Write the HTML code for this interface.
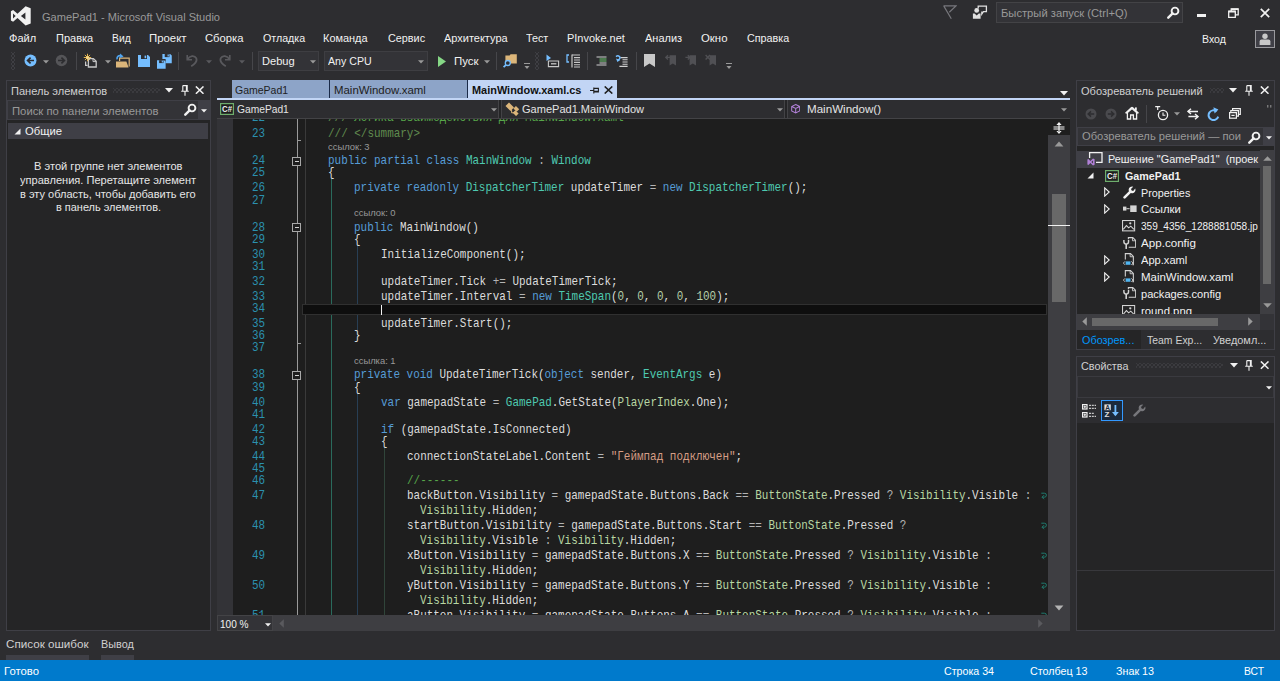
<!DOCTYPE html>
<html lang="ru"><head><meta charset="utf-8"><title>GamePad1 - Microsoft Visual Studio</title>
<style>
html,body{margin:0;padding:0}
body{width:1280px;height:681px;overflow:hidden;background:#2d2d30;position:relative;font-family:"Liberation Sans",sans-serif;font-size:11.5px;color:#f1f1f1}
div,svg.abs,.abs,.t{position:absolute}
h1,h2,p{margin:0;font-weight:400;font-size:11.5px}
.t{white-space:pre;line-height:20px;transform-origin:0 50%;color:#f1f1f1}
.grip{background-image:radial-gradient(circle,var(--c) 0.7px,transparent 0.9px),radial-gradient(circle,var(--c) 0.7px,transparent 0.9px);background-size:4px 4px;background-position:0 0,2px 2px}
.dots{background-image:radial-gradient(circle,#4a4a4f 0.6px,transparent 0.8px),radial-gradient(circle,#4a4a4f 0.6px,transparent 0.8px);background-size:4px 4px;background-position:0 0,2px 2px}
.code{overflow:hidden;background:#1e1e1e}
.tree{overflow:hidden}
.ln{white-space:pre;font-family:"Liberation Mono",monospace;font-size:13.3px;line-height:20px;color:#dcdcdc;transform-origin:0 50%;transform:scaleX(0.8234)}
.num{color:#2b91af}
.k{color:#569cd6}.ty{color:#4ec9b0}.e{color:#b8d7a3}.s{color:#d69d85}.c{color:#57a64a}.d{color:#608b4e}.n{color:#b5cea8}.o{color:#b4b4b4}
.fold{width:9px;height:9px;box-sizing:border-box;border:1px solid #a8a8a8;background:#1e1e1e}
.fold:after{content:"";position:absolute;left:1.5px;top:3px;width:4px;height:1px;background:#d0d0d0}
</style></head>
<body>
<header class="titlebar">
<svg class="abs" style="left:10px;top:5px" width="22" height="22" viewBox="0 0 22 22"><path fill="#f1f1f1" d="M15.6 1.2 L20.7 3.3 V18.4 L15.6 20.5 L7.5 13 L3.1 16.7 L0.9 15.5 V6.3 L3.1 5.1 L7.5 8.8 Z M15.4 7.4 L10.9 10.9 L15.4 14.4 Z M3 8.4 V13.4 L5.7 10.9 Z"/></svg>
<h1 class="t" style="left:41.7px;top:7px;color:#999999;transform:scaleX(0.9614);">GamePad1 - Microsoft Visual Studio</h1>
<svg class="abs" style="left:943px;top:5px" width="14" height="15" viewBox="0 0 14 15"><path fill="none" stroke="#77777c" stroke-width="1.2" d="M0.5 0.9 H13 L6.3 7.2 M0.7 0.9 L8.3 13.8"/></svg>
<svg class="abs" style="left:972px;top:5px" width="16" height="15" viewBox="0 0 16 15"><path fill="none" stroke="#e0e0e0" stroke-width="1.3" d="M6.2 3.4 V1.2 H14.4 V6.6 H11.4 L9.8 9 V6.6"/><circle cx="4.7" cy="5.4" r="2.4" fill="#e0e0e0"/><path fill="#e0e0e0" d="M0.9 13.8 V8.4 H2.6 L4.7 10.4 L6.8 8.4 H8.6 V13.8 Z"/></svg>
<div class="quick" style="left:996px;top:2px;width:187px;height:21px;background:#333337;border:1px solid #434346;box-sizing:border-box;"></div>
<div class="t" style="left:1001.0px;top:3px;color:#999999;transform:scaleX(0.9737);">Быстрый запуск (Ctrl+Q)</div>
<svg class="abs" style="left:1167px;top:5.5px" width="13" height="13" viewBox="0 0 13 13"><circle cx="8" cy="5" r="3.4" fill="none" stroke="#f1f1f1" stroke-width="1.9"/><path d="M5.6 7.4 L1.3 11.7" stroke="#f1f1f1" stroke-width="2.4" stroke-linecap="round"/></svg>
<div style="left:1197px;top:14px;width:9px;height:3px;background:#f1f1f1;"></div>
<svg class="abs" style="left:1228px;top:8px" width="11" height="10" viewBox="0 0 11 10"><path fill="none" stroke="#f1f1f1" stroke-width="1.3" d="M0.7 3.2 H7.3 V9.3 H0.7 Z M3.2 3 V0.8 H10.2 V6.8 H7.6"/><path d="M0.7 3.6H7.3M3.2 1.2H10.2" stroke="#f1f1f1" stroke-width="1.6"/></svg>
<svg class="abs" style="left:1260px;top:8px" width="10" height="10" viewBox="0 0 10 10"><path d="M0.8 0.8 L9.2 9.2 M9.2 0.8 L0.8 9.2" stroke="#f1f1f1" stroke-width="1.7"/></svg>
</header>
<nav class="menubar">
<span class="t" style="left:9.4px;top:28px;transform:scaleX(0.9618);">Файл</span>
<span class="t" style="left:55.6px;top:28px;transform:scaleX(0.9573);">Правка</span>
<span class="t" style="left:111.9px;top:28px;transform:scaleX(0.8985);">Вид</span>
<span class="t" style="left:149.4px;top:28px;transform:scaleX(0.9897);">Проект</span>
<span class="t" style="left:205.3px;top:28px;transform:scaleX(0.9778);">Сборка</span>
<span class="t" style="left:262.5px;top:28px;transform:scaleX(0.9281);">Отладка</span>
<span class="t" style="left:323.4px;top:28px;transform:scaleX(0.9518);">Команда</span>
<span class="t" style="left:387.6px;top:28px;transform:scaleX(0.9418);">Сервис</span>
<span class="t" style="left:443.6px;top:28px;transform:scaleX(0.9546);">Архитектура</span>
<span class="t" style="left:526.1px;top:28px;transform:scaleX(0.9371);">Тест</span>
<span class="t" style="left:567.3px;top:28px;transform:scaleX(0.9517);">PInvoke.net</span>
<span class="t" style="left:644.7px;top:28px;transform:scaleX(0.9555);">Анализ</span>
<span class="t" style="left:700.7px;top:28px;transform:scaleX(0.9912);">Окно</span>
<span class="t" style="left:746.8px;top:28px;transform:scaleX(0.9352);">Справка</span>
<span class="t" style="left:1201.5px;top:29px;transform:scaleX(0.9148);">Вход</span>
<div class="avatar" style="left:1255px;top:30px;width:20px;height:18px;background:#3f3f46;border:1px solid #9a9a9e;box-sizing:border-box;"><svg width="18" height="16" viewBox="0 0 18 16" style="display:block"><circle cx="9" cy="5.2" r="2.7" fill="#c8c8c8"/><path d="M3.6 14 V10.4 Q3.6 8.6 5.6 8.6 H12.4 Q14.4 8.6 14.4 10.4 V14 Z" fill="#c8c8c8"/></svg></div>
</nav>
<div class="toolbar">
<div class="abs grip" style="left:11px;top:52px;width:4px;height:18px;--c:#3f3f44"></div>
<svg class="abs" style="left:24px;top:54px" width="13" height="13" viewBox="0 0 13 13"><circle cx="6.5" cy="6.5" r="6" fill="#75beff"/><path d="M10 6.5 H4 M6.6 3.6 L3.6 6.5 L6.6 9.4" stroke="#2d2d30" stroke-width="1.7" fill="none"/></svg>
<svg class="abs" style="left:42.8px;top:60px" width="6" height="4" viewBox="0 0 6 4"><path d="M0 0.3H6L3 3.6Z" fill="#999999"/></svg>
<svg class="abs" style="left:55px;top:54px" width="13" height="13" viewBox="0 0 13 13"><circle cx="6.5" cy="6.5" r="5.8" fill="#555558"/><path d="M3 6.5 H9 M6.4 3.6 L9.4 6.5 L6.4 9.4" stroke="#2d2d30" stroke-width="1.7" fill="none"/></svg>
<div style="left:76px;top:52px;width:1px;height:18px;background:#46464a;"></div>
<svg class="abs" style="left:83px;top:53px" width="16" height="16" viewBox="0 0 16 16"><path d="M2.6 8.5 V12.4 H4.6" fill="none" stroke="#c8c8c8" stroke-width="1.2"/><path d="M5.4 5.6 H10.4 L13.2 8.2 V14 H5.4 Z" fill="none" stroke="#c8c8c8" stroke-width="1.3"/><path d="M10 5.8 V8.6 H13" fill="none" stroke="#c8c8c8" stroke-width="1"/><path d="M4.5 0.8 V8.2 M0.8 4.5 H8.2 M1.9 1.9 L7.1 7.1 M7.1 1.9 L1.9 7.1" stroke="#e8b64a" stroke-width="1"/><circle cx="4.5" cy="4.5" r="1.5" fill="#f6d88a"/></svg>
<svg class="abs" style="left:104.5px;top:60px" width="6" height="4" viewBox="0 0 6 4"><path d="M0 0.3H6L3 3.6Z" fill="#999999"/></svg>
<svg class="abs" style="left:115px;top:53px" width="16" height="16" viewBox="0 0 16 16"><path d="M4.6 8 V5.2 H14.2 V13.6" fill="none" stroke="#dcb67a" stroke-width="1.2"/><path d="M1 8.6 H11.4 L13.6 14.6 H1 Z" fill="#dcb67a"/><path d="M2 6.4 C1.6 3 4.4 1.8 6.4 3.2" fill="none" stroke="#4fa4f0" stroke-width="1.6"/><path d="M5.2 0.6 L8.6 3.4 L4.6 5.2 Z" fill="#4fa4f0"/></svg>
<svg class="abs" style="left:138px;top:55px" width="12" height="12" viewBox="0 0 12 12"><path d="M0 0 H10 L12 2 V12 H0 Z" fill="#75beff"/><rect x="3" y="0" width="6" height="4" fill="#2d2d30"/><rect x="6.6" y="0.6" width="1.6" height="2.6" fill="#75beff"/></svg>
<svg class="abs" style="left:157px;top:54px" width="15" height="15" viewBox="0 0 15 15"><g transform="translate(5.4,0) scale(.78)"><path d="M0 0 H10 L12 2 V12 H0 Z" fill="#75beff"/><rect x="3" y="0" width="6" height="4" fill="#2d2d30"/><rect x="6.6" y="0.6" width="1.6" height="2.6" fill="#75beff"/></g><rect x="-1" y="5" width="9.6" height="11" fill="#2d2d30"/><g transform="translate(0,6.2) scale(.72)"><path d="M0 0 H10 L12 2 V12 H0 Z" fill="#75beff"/><rect x="3" y="0" width="6" height="4" fill="#2d2d30"/><rect x="6.6" y="0.6" width="1.6" height="2.6" fill="#75beff"/></g></svg>
<div style="left:178px;top:52px;width:1px;height:18px;background:#46464a;"></div>
<svg class="abs" style="left:186px;top:54px" width="12" height="13" viewBox="0 0 12 13"><path d="M1.2 1 V5.8 H6" fill="none" stroke="#59595d" stroke-width="1.6"/><path d="M1.6 5.4 C3.5 1.6 8.6 1 10.2 4.2 C11.6 7.4 8.6 10.2 5.2 12.2" fill="none" stroke="#59595d" stroke-width="1.8"/></svg>
<svg class="abs" style="left:206px;top:60px" width="6" height="4" viewBox="0 0 6 4"><path d="M0 0.3H6L3 3.6Z" fill="#59595d"/></svg>
<svg class="abs" style="left:218.5px;top:54px;transform:scaleX(-1)" width="12" height="13" viewBox="0 0 12 13"><path d="M1.2 1 V5.8 H6" fill="none" stroke="#59595d" stroke-width="1.6"/><path d="M1.6 5.4 C3.5 1.6 8.6 1 10.2 4.2 C11.6 7.4 8.6 10.2 5.2 12.2" fill="none" stroke="#59595d" stroke-width="1.8"/></svg>
<svg class="abs" style="left:239px;top:60px" width="6" height="4" viewBox="0 0 6 4"><path d="M0 0.3H6L3 3.6Z" fill="#59595d"/></svg>
<div style="left:251.5px;top:52px;width:1px;height:18px;background:#46464a;"></div>
<div class="combo" style="left:258px;top:50.6px;width:61px;height:20px;background:#333337;border:1px solid #3e3e42;box-sizing:border-box;"></div>
<span class="t" style="left:261.6px;top:51px;transform:scaleX(0.9649);">Debug</span>
<svg class="abs" style="left:309.5px;top:60px" width="6" height="4" viewBox="0 0 6 4"><path d="M0 0.3H6L3 3.6Z" fill="#999999"/></svg>
<div class="combo" style="left:324px;top:50.6px;width:104px;height:20px;background:#333337;border:1px solid #3e3e42;box-sizing:border-box;"></div>
<span class="t" style="left:328.1px;top:51px;transform:scaleX(0.9240);">Any CPU</span>
<svg class="abs" style="left:418px;top:60px" width="6" height="4" viewBox="0 0 6 4"><path d="M0 0.3H6L3 3.6Z" fill="#999999"/></svg>
<svg class="abs" style="left:437.5px;top:55.5px" width="8" height="11" viewBox="0 0 8 11"><path d="M0 0 L8 5.5 L0 11 Z" fill="#86d886"/></svg>
<span class="t" style="left:453.6px;top:51px;transform:scaleX(0.9971);">Пуск</span>
<svg class="abs" style="left:484px;top:60px" width="6" height="4" viewBox="0 0 6 4"><path d="M0 0.3H6L3 3.6Z" fill="#999999"/></svg>
<div style="left:495.5px;top:52px;width:1px;height:18px;background:#46464a;"></div>
<svg class="abs" style="left:502px;top:53px" width="16" height="16" viewBox="0 0 16 16"><path d="M3.4 2.4 H7.6 L8.6 1.2 H14.8 V10.6 H3.4 Z" fill="#dcb67a"/><circle cx="5.8" cy="10" r="2.5" fill="#2d2d30" stroke="#75beff" stroke-width="1.3"/><path d="M4 11.8 L1.6 14.2" stroke="#75beff" stroke-width="1.8"/></svg>
<svg class="abs" style="left:524px;top:63px" width="6" height="7" viewBox="0 0 6 7"><path d="M0 0.5H6" stroke="#999" stroke-width="1"/><path d="M0.5 3H5.5L3 6Z" fill="#999"/></svg>
<div class="abs grip" style="left:535px;top:52px;width:4px;height:18px;--c:#3f3f44"></div>
<svg class="abs" style="left:546px;top:54px" width="14" height="14" viewBox="0 0 14 14"><path d="M0.5 0.5 L5 4 L0.5 7 Z" fill="#75beff"/><path d="M2.4 7 H12.6 V12.6 H2.4 Z" fill="none" stroke="#c8c8c8" stroke-width="1.1"/><path d="M5 9.8 H10.4" stroke="#c8c8c8" stroke-width="1.3"/></svg>
<svg class="abs" style="left:566px;top:54px" width="15" height="14" viewBox="0 0 15 14"><path d="M3 1 H1 V8 H3" fill="none" stroke="#75beff" stroke-width="1.3"/><path d="M6 0.4 V13.4" stroke="#c8c8c8" stroke-width="1.2"/><path d="M6 1H14M8 3.6H14M8 6H14M8 8.4H14M8 10.8H14M8 13H14" stroke="#c8c8c8" stroke-width="1.1"/></svg>
<div style="left:587px;top:52px;width:1px;height:18px;background:#46464a;"></div>
<svg class="abs" style="left:595.5px;top:55.5px" width="11" height="10" viewBox="0 0 11 10"><path d="M0.5 1H10.5M3.5 7H10.5M0.5 9H10.5" stroke="#d0d0d0" stroke-width="1.1"/><path d="M3.5 3H10.5M3.5 5H10.5" stroke="#6cc86c" stroke-width="1.1"/></svg>
<svg class="abs" style="left:615px;top:54.5px" width="13" height="12" viewBox="0 0 13 12"><path d="M5.5 2.6H12.6M7.5 4.8H12.6M7.5 7H12.6M7.5 9.2H12.6M4.4 11.4H12.6" stroke="#d0d0d0" stroke-width="1.1"/><path d="M1 1.6 C3.4 -0.2 6 1.8 4.4 4 L3 5.4" fill="none" stroke="#75beff" stroke-width="1.5"/><path d="M1 3.6 L2.4 7 L5.2 5 Z" fill="#75beff"/></svg>
<div style="left:636.2px;top:52px;width:1px;height:18px;background:#46464a;"></div>
<svg class="abs" style="left:644px;top:54px" width="11" height="13" viewBox="0 0 11 13"><path d="M0 0H11V13L5.5 9.6L0 13Z" fill="#c8c8c8"/></svg>
<svg class="abs" style="left:665px;top:54px" width="12" height="13" viewBox="0 0 12 13"><path d="M4.6 1.2H11V11.6L7.8 9.4L4.6 11.6Z" fill="#505054"/><path d="M5.4 3.4H1.2M3 1.2L0.8 3.4L3 5.6" fill="none" stroke="#505054" stroke-width="1.4"/></svg>
<svg class="abs" style="left:685px;top:54px" width="12" height="13" viewBox="0 0 12 13"><path d="M4.6 1.2H11V11.6L7.8 9.4L4.6 11.6Z" fill="#505054"/><path d="M0.4 3.4H4.8M2.8 1.2L5 3.4L2.8 5.6" fill="none" stroke="#505054" stroke-width="1.4"/></svg>
<svg class="abs" style="left:705px;top:54px" width="12" height="13" viewBox="0 0 12 13"><path d="M4.6 1.2H11V11.6L7.8 9.4L4.6 11.6Z" fill="#505054"/><path d="M0.6 1L5 5.6M5 1L0.6 5.6" fill="none" stroke="#505054" stroke-width="1.4"/></svg>
<svg class="abs" style="left:726px;top:63px" width="6" height="7" viewBox="0 0 6 7"><path d="M0 0.5H6" stroke="#999" stroke-width="1"/><path d="M0.5 3H5.5L3 6Z" fill="#999"/></svg>
</div>
<aside class="toolbox">
<div class="pane" style="left:6px;top:80px;width:205px;height:551px;background:#252526;border:1px solid #3f3f46;box-sizing:border-box;"></div>
<div style="left:7px;top:81px;width:203px;height:19px;background:#2d2d30;"></div>
<h2 class="t" style="left:10.6px;top:81px;color:#d0d0d0;transform:scaleX(0.9625);">Панель элементов</h2>
<div class="abs dots" style="left:113px;top:88px;width:47px;height:5px"></div>
<svg class="abs" style="left:165px;top:87.6px" width="8" height="5" viewBox="0 0 8 5"><path d="M0 0H8L4 4.6Z" fill="#f1f1f1"/></svg>
<svg class="abs" style="left:180.5px;top:84.8px" width="8" height="11" viewBox="0 0 8 11"><path d="M1.8 0.6 H6.2 V6 M1.8 0.6 V6 M0.2 6.3 H7.8 M4 6.3 V10.8 M5.4 0.6 V6" fill="none" stroke="#f1f1f1" stroke-width="1.1"/></svg>
<svg class="abs" style="left:194.8px;top:86px" width="9.4" height="8.2" viewBox="0 0 10 9"><path d="M0.8 0.5 L9.2 8.5 M9.2 0.5 L0.8 8.5" stroke="#f1f1f1" stroke-width="1.7"/></svg>
<div class="search" style="left:7px;top:100px;width:203px;height:20px;background:#333337;border:1px solid #3f3f46;box-sizing:border-box;"></div>
<div style="left:198px;top:101px;width:11px;height:18px;background:#3f3f46;"></div>
<span class="t" style="left:11.6px;top:101px;color:#999999;transform:scaleX(0.9825);">Поиск по панели элементов</span>
<svg class="abs" style="left:183.5px;top:102.8px" width="13" height="13" viewBox="0 0 13 13"><circle cx="8" cy="5" r="3.4" fill="none" stroke="#f1f1f1" stroke-width="1.9"/><path d="M5.6 7.4 L1.3 11.7" stroke="#f1f1f1" stroke-width="2.4" stroke-linecap="round"/></svg>
<svg class="abs" style="left:200.5px;top:108.5px" width="6" height="4" viewBox="0 0 6 4"><path d="M0 0.3H6L3 3.6Z" fill="#f1f1f1"/></svg>
<div class="grp" style="left:8px;top:123px;width:200px;height:16px;background:#3f3f46;"></div>
<svg class="abs" style="left:13.5px;top:127.5px" width="7" height="7" viewBox="0 0 7 7"><path d="M6.5 0.5V6.5H0.5Z" fill="#f1f1f1"/></svg>
<span class="t" style="left:25.0px;top:121px;transform:scaleX(0.9781);">Общие</span>
<p class="t" style="left:33.8px;top:156px;color:#e6e6e6;transform:scaleX(0.9660);">В этой группе нет элементов</p>
<p class="t" style="left:19.5px;top:170px;color:#e6e6e6;transform:scaleX(0.9624);">управления. Перетащите элемент</p>
<p class="t" style="left:20.0px;top:184px;color:#e6e6e6;transform:scaleX(0.9577);">в эту область, чтобы добавить его</p>
<p class="t" style="left:56.0px;top:197px;color:#e6e6e6;transform:scaleX(0.9510);">в панель элементов.</p>
</aside>
<main class="editor">
<div class="tab" style="left:232px;top:80px;width:97px;height:18px;background:#8da4c8;"></div>
<div class="tab" style="left:330px;top:80px;width:136.5px;height:18px;background:#8da4c8;"></div>
<div class="tab active" style="left:467.6px;top:80px;width:149.6px;height:18px;background:#c2d5f5;"></div>
<div class="tabline" style="left:217px;top:97.5px;width:853px;height:2px;background:#c2d5f5;"></div>
<div style="left:329px;top:80px;width:1px;height:17.5px;background:#1a2a48;"></div>
<div style="left:466.5px;top:80px;width:1px;height:17.5px;background:#1a2a48;"></div>
<span class="t" style="left:235.3px;top:80px;color:#1e1e1e;transform:scaleX(0.9126);">GamePad1</span>
<span class="t" style="left:334.3px;top:80px;color:#1e1e1e;transform:scaleX(0.9917);">MainWindow.xaml</span>
<span class="t" style="left:472.0px;top:80px;color:#111111;font-weight:700;transform:scaleX(0.9501);">MainWindow.xaml.cs</span>
<svg class="abs" style="left:589.5px;top:86.5px" width="9" height="7" viewBox="0 0 9 7"><path d="M0 3.5 H3.6 M3.8 0.4 V6.6 M3.8 1.4 H8.4 V5 H3.8 M3.8 4.3H8.4" fill="none" stroke="#1e1e1e" stroke-width="1.1"/></svg>
<svg class="abs" style="left:604px;top:86px" width="9" height="8" viewBox="0 0 9 8"><path d="M0.7 0.4 L8.3 7.6 M8.3 0.4 L0.7 7.6" stroke="#1e1e1e" stroke-width="1.5"/></svg>
<svg class="abs" style="left:1060px;top:91px" width="8" height="5" viewBox="0 0 8 5"><path d="M0 0H8L4 4.4Z" fill="#f1f1f1"/></svg>
<div class="navbar" style="left:217px;top:99.7px;width:853px;height:19.3px;background:#2d2d30;"></div>
<div style="left:217px;top:118px;width:853px;height:1px;background:#434346;"></div>
<div style="left:497.5px;top:100px;width:4.5px;height:18px;background:#252527;border:1px solid #434346;box-sizing:border-box;border-top:0;border-bottom:0;"></div>
<div style="left:783.8px;top:100px;width:4.5px;height:18px;background:#252527;border:1px solid #434346;box-sizing:border-box;border-top:0;border-bottom:0;"></div>
<svg class="abs" style="left:220px;top:103px" width="14" height="12" viewBox="0 0 14 12"><rect x="0.6" y="0.6" width="12.8" height="10.8" fill="#1e1e1e" stroke="#6fae6d" stroke-width="1.2"/><text x="2" y="9" font-family="Liberation Sans, sans-serif" font-size="8.5" font-weight="700" fill="#f1f1f1" textLength="10" lengthAdjust="spacingAndGlyphs">C#</text></svg>
<span class="t" style="left:236.9px;top:99px;color:#e4e4e4;transform:scaleX(0.8902);">GamePad1</span>
<svg class="abs" style="left:490.5px;top:108px" width="6" height="4" viewBox="0 0 6 4"><path d="M0 0.3H6L3 3.6Z" fill="#999999"/></svg>
<svg class="abs" style="left:505px;top:102px" width="15" height="14" viewBox="0 0 15 14"><path d="M0.5 4 L4 0.5 L9 5.5 L5.5 9 Z" fill="#dcb67a"/><rect x="9" y="5" width="4.6" height="3.6" fill="#dcb67a" transform="rotate(45 11.3 6.8)"/><rect x="8.4" y="9.4" width="4.6" height="3.6" fill="#dcb67a" transform="rotate(45 10.7 11.2)"/><path d="M6.6 7.4 V10.8 H9" fill="none" stroke="#dcb67a" stroke-width="1"/></svg>
<span class="t" style="left:522.0px;top:99px;color:#e4e4e4;transform:scaleX(0.9591);">GamePad1.MainWindow</span>
<svg class="abs" style="left:776.5px;top:108px" width="6" height="4" viewBox="0 0 6 4"><path d="M0 0.3H6L3 3.6Z" fill="#999999"/></svg>
<svg class="abs" style="left:791px;top:104.2px" width="9.4" height="9.4" viewBox="0 0 11 11"><path d="M5.5 0.6 L10.2 2.9 V8.1 L5.5 10.4 L0.8 8.1 V2.9 Z M0.9 3 L5.5 5.2 L10.1 3 M5.5 5.2 V10.3" fill="none" stroke="#b180d7" stroke-width="1.2"/></svg>
<span class="t" style="left:807.4px;top:99px;color:#e4e4e4;transform:scaleX(1.0082);">MainWindow()</span>
<svg class="abs" style="left:1061px;top:108px" width="6" height="4" viewBox="0 0 6 4"><path d="M0 0.3H6L3 3.6Z" fill="#999999"/></svg>
<section class="abs code" style="left:217px;top:119px;width:831px;height:496px">
<div style="left:0px;top:0px;width:16px;height:496px;background:#333337;"></div>
<div style="left:88.3px;top:0px;width:1px;height:496px;background:#3a3a3a;"></div>
<div style="left:114.2px;top:60px;width:1px;height:436px;background:#2a6a5c;"></div>
<div style="left:140.4px;top:127px;width:1px;height:85px;background:#283f55;"></div>
<div style="left:140.4px;top:275px;width:1px;height:221px;background:#283f55;"></div>
<div style="left:166.5px;top:329px;width:1px;height:167px;background:#30453a;"></div>
<div style="left:79.5px;top:0px;width:1px;height:496px;background:#9a9a9a;"></div>
<div style="left:80px;top:21px;width:3.5px;height:1px;background:#9a9a9a;"></div>
<div style="left:80px;top:223.5px;width:3.5px;height:1px;background:#9a9a9a;"></div>
<div style="left:84.5px;top:185px;width:745px;height:11px;background:#0e0e0e;border:1px solid #303030;box-sizing:border-box;"></div>
<div style="left:164px;top:186px;width:1px;height:9.5px;background:#f1f1f1;"></div>
<div class="ln num" style="left:35.3px;top:-11.00px">22</div>
<div class="ln" style="left:110.99px;top:-11.00px"><span class="d">/// </span><span class="c">Логика взаимодействия для MainWindow.xaml</span></div>
<div class="ln num" style="left:35.3px;top:5.00px">23</div>
<div class="ln" style="left:110.99px;top:5.00px"><span class="d">/// &lt;/summary&gt;</span></div>
<div class="ln num" style="left:35.3px;top:32.00px">24</div>
<div class="fold" style="left:75px;top:37.5px"></div>
<div class="ln" style="left:110.99px;top:32.00px"><span class="k">public partial class </span><span class="ty">MainWindow</span> <span class="o">:</span> <span class="ty">Window</span></div>
<div class="ln num" style="left:35.3px;top:44.00px">25</div>
<div class="ln" style="left:110.99px;top:44.00px">{</div>
<div class="ln num" style="left:35.3px;top:59.00px">26</div>
<div class="ln" style="left:137.28px;top:59.00px"><span class="k">private readonly </span><span class="ty">DispatcherTimer</span> updateTimer <span class="o">=</span> <span class="k">new </span><span class="ty">DispatcherTimer</span>();</div>
<div class="ln num" style="left:35.3px;top:72.00px">27</div>
<div class="ln num" style="left:35.3px;top:99.00px">28</div>
<div class="fold" style="left:75px;top:103.9px"></div>
<div class="ln" style="left:137.28px;top:99.00px"><span class="k">public </span>MainWindow()</div>
<div class="ln num" style="left:35.3px;top:111.00px">29</div>
<div class="ln" style="left:137.28px;top:111.00px">{</div>
<div class="ln num" style="left:35.3px;top:126.00px">30</div>
<div class="ln" style="left:163.56px;top:126.00px">InitializeComponent();</div>
<div class="ln num" style="left:35.3px;top:138.00px">31</div>
<div class="ln num" style="left:35.3px;top:153.00px">32</div>
<div class="ln" style="left:163.56px;top:153.00px">updateTimer.Tick <span class="o">+=</span> UpdateTimerTick;</div>
<div class="ln num" style="left:35.3px;top:168.00px">33</div>
<div class="ln" style="left:163.56px;top:168.00px">updateTimer.Interval <span class="o">=</span> <span class="k">new </span><span class="ty">TimeSpan</span>(<span class="n">0</span>, <span class="n">0</span>, <span class="n">0</span>, <span class="n">0</span>, <span class="n">100</span>);</div>
<div class="ln num" style="left:35.3px;top:180.00px">34</div>
<div class="ln num" style="left:35.3px;top:195.00px">35</div>
<div class="ln" style="left:163.56px;top:195.00px">updateTimer.Start();</div>
<div class="ln num" style="left:35.3px;top:207.00px">36</div>
<div class="ln" style="left:137.28px;top:207.00px">}</div>
<div class="ln num" style="left:35.3px;top:219.00px">37</div>
<div class="ln num" style="left:35.3px;top:246.00px">38</div>
<div class="fold" style="left:75px;top:251.6px"></div>
<div class="ln" style="left:137.28px;top:246.00px"><span class="k">private void </span>UpdateTimerTick(<span class="k">object</span> sender, <span class="ty">EventArgs</span> e)</div>
<div class="ln num" style="left:35.3px;top:259.00px">39</div>
<div class="ln" style="left:137.28px;top:259.00px">{</div>
<div class="ln num" style="left:35.3px;top:274.00px">40</div>
<div class="ln" style="left:163.56px;top:274.00px"><span class="k">var</span> gamepadState <span class="o">=</span> <span class="ty">GamePad</span>.GetState(<span class="e">PlayerIndex</span>.One);</div>
<div class="ln num" style="left:35.3px;top:286.00px">41</div>
<div class="ln num" style="left:35.3px;top:301.00px">42</div>
<div class="ln" style="left:163.56px;top:301.00px"><span class="k">if</span> (gamepadState.IsConnected)</div>
<div class="ln num" style="left:35.3px;top:313.00px">43</div>
<div class="ln" style="left:163.56px;top:313.00px">{</div>
<div class="ln num" style="left:35.3px;top:328.00px">44</div>
<div class="ln" style="left:189.85px;top:328.00px">connectionStateLabel.Content <span class="o">=</span> <span class="s">"Геймпад подключен"</span>;</div>
<div class="ln num" style="left:35.3px;top:340.00px">45</div>
<div class="ln num" style="left:35.3px;top:352.00px">46</div>
<div class="ln" style="left:189.85px;top:352.00px"><span class="c">//------</span></div>
<div class="ln num" style="left:35.3px;top:367.00px">47</div>
<div class="ln" style="left:189.85px;top:367.00px">backButton.Visibility <span class="o">=</span> gamepadState.Buttons.Back <span class="o">==</span> <span class="e">ButtonState</span>.Pressed <span class="o">?</span> <span class="e">Visibility</span>.Visible <span class="o">:</span></div>
<svg class="abs" style="left:823.5px;top:373.0px" width="6" height="8" viewBox="0 0 6 8"><path d="M0.3 1.2 H3.4 Q5.4 1.2 5.4 3.2 Q5.4 5.2 3.4 5.2 H1.2 M3 3.2 L1 5.2 L3 7.2" fill="none" stroke="#1f7a6e" stroke-width="1"/></svg>
<div class="ln" style="left:203.00px;top:382.00px"><span class="e">Visibility</span>.Hidden;</div>
<div class="ln num" style="left:35.3px;top:397.00px">48</div>
<div class="ln" style="left:189.85px;top:397.00px">startButton.Visibility <span class="o">=</span> gamepadState.Buttons.Start <span class="o">==</span> <span class="e">ButtonState</span>.Pressed <span class="o">?</span></div>
<svg class="abs" style="left:823.5px;top:403.0px" width="6" height="8" viewBox="0 0 6 8"><path d="M0.3 1.2 H3.4 Q5.4 1.2 5.4 3.2 Q5.4 5.2 3.4 5.2 H1.2 M3 3.2 L1 5.2 L3 7.2" fill="none" stroke="#1f7a6e" stroke-width="1"/></svg>
<div class="ln" style="left:203.00px;top:412.00px"><span class="e">Visibility</span>.Visible <span class="o">:</span> <span class="e">Visibility</span>.Hidden;</div>
<div class="ln num" style="left:35.3px;top:427.00px">49</div>
<div class="ln" style="left:189.85px;top:427.00px">xButton.Visibility <span class="o">=</span> gamepadState.Buttons.X <span class="o">==</span> <span class="e">ButtonState</span>.Pressed <span class="o">?</span> <span class="e">Visibility</span>.Visible <span class="o">:</span></div>
<svg class="abs" style="left:823.5px;top:433.0px" width="6" height="8" viewBox="0 0 6 8"><path d="M0.3 1.2 H3.4 Q5.4 1.2 5.4 3.2 Q5.4 5.2 3.4 5.2 H1.2 M3 3.2 L1 5.2 L3 7.2" fill="none" stroke="#1f7a6e" stroke-width="1"/></svg>
<div class="ln" style="left:203.00px;top:442.00px"><span class="e">Visibility</span>.Hidden;</div>
<div class="ln num" style="left:35.3px;top:457.00px">50</div>
<div class="ln" style="left:189.85px;top:457.00px">yButton.Visibility <span class="o">=</span> gamepadState.Buttons.Y <span class="o">==</span> <span class="e">ButtonState</span>.Pressed <span class="o">?</span> <span class="e">Visibility</span>.Visible <span class="o">:</span></div>
<svg class="abs" style="left:823.5px;top:463.0px" width="6" height="8" viewBox="0 0 6 8"><path d="M0.3 1.2 H3.4 Q5.4 1.2 5.4 3.2 Q5.4 5.2 3.4 5.2 H1.2 M3 3.2 L1 5.2 L3 7.2" fill="none" stroke="#1f7a6e" stroke-width="1"/></svg>
<div class="ln" style="left:203.00px;top:472.00px"><span class="e">Visibility</span>.Hidden;</div>
<div class="ln num" style="left:35.3px;top:487.00px">51</div>
<div class="ln" style="left:189.85px;top:487.00px">aButton.Visibility <span class="o">=</span> gamepadState.Buttons.A <span class="o">==</span> <span class="e">ButtonState</span>.Pressed <span class="o">?</span> <span class="e">Visibility</span>.Visible <span class="o">:</span></div>
<svg class="abs" style="left:823.5px;top:493.0px" width="6" height="8" viewBox="0 0 6 8"><path d="M0.3 1.2 H3.4 Q5.4 1.2 5.4 3.2 Q5.4 5.2 3.4 5.2 H1.2 M3 3.2 L1 5.2 L3 7.2" fill="none" stroke="#1f7a6e" stroke-width="1"/></svg>
<span class="t lens" style="left:111.0px;top:18px;font-size:8.6px;color:#999999;transform:scaleX(1.0952);">ссылок: 3</span>
<span class="t lens" style="left:137.3px;top:84px;font-size:8.6px;color:#999999;transform:scaleX(1.0952);">ссылок: 0</span>
<span class="t lens" style="left:137.3px;top:232px;font-size:8.6px;color:#999999;transform:scaleX(1.0925);">ссылка: 1</span>
</section>
<div class="vscroll" style="left:1048px;top:119px;width:22px;height:496px;background:#3e3e42;"></div>
<div style="left:1048px;top:119px;width:22px;height:16px;background:#1e1e1e;"></div>
<svg class="abs" style="left:1053px;top:121.5px" width="12" height="12" viewBox="0 0 12 12"><path d="M0.5 5H11.5M0.5 7H11.5" stroke="#f1f1f1" stroke-width="1.1"/><path d="M6 0L8.6 3H3.4ZM6 12L8.6 9H3.4Z M5.4 2.5H6.6V9.5H5.4Z" fill="#f1f1f1"/></svg>
<svg class="abs" style="left:1054.3px;top:141.3px" width="10" height="6" viewBox="0 0 10 6"><path d="M5 0.5L9.4 5.4H0.6Z" fill="#999999"/></svg>
<div class="thumb" style="left:1052.4px;top:194px;width:13.4px;height:107.6px;background:#686868;"></div>
<div style="left:1048px;top:224.5px;width:22px;height:1.6px;background:#f1f1f1;"></div>
<svg class="abs" style="left:1054.3px;top:604.5px" width="10" height="6" viewBox="0 0 10 6"><path d="M5 5.4L9.4 0.4H0.6Z" fill="#b4b4b4"/></svg>
<div class="hscroll" style="left:217px;top:615px;width:853px;height:16px;background:#3e3e42;"></div>
<div class="zoom" style="left:217px;top:615px;width:55.5px;height:16px;background:#333337;border:1px solid #434346;box-sizing:border-box;"></div>
<span class="t" style="left:219.5px;top:614px;font-size:10.5px;transform:scaleX(0.9603);">100 %</span>
<svg class="abs" style="left:264.5px;top:622.7px" width="6" height="4" viewBox="0 0 6 4"><path d="M0 0.3H6L3 3.6Z" fill="#f1f1f1"/></svg>
<svg class="abs" style="left:278.5px;top:618.5px" width="5" height="9" viewBox="0 0 5 9"><path d="M4.8 0.3V8.7L0.3 4.5Z" fill="#5a5a5e"/></svg>
<svg class="abs" style="left:1037.5px;top:618.5px" width="5" height="9" viewBox="0 0 5 9"><path d="M0.2 0.3V8.7L4.7 4.5Z" fill="#5a5a5e"/></svg>
<div style="left:1048px;top:615px;width:22px;height:16px;background:#3e3e42;"></div>
</main>
<aside class="solution">
<div class="pane" style="left:1076px;top:80px;width:199px;height:270px;background:#252526;border:1px solid #3f3f46;box-sizing:border-box;"></div>
<div style="left:1077px;top:81px;width:197px;height:46px;background:#2d2d30;"></div>
<h2 class="t" style="left:1080.9px;top:81px;color:#d0d0d0;transform:scaleX(0.9601);">Обозреватель решений</h2>
<div class="abs dots" style="left:1210px;top:88px;width:14px;height:5px"></div>
<svg class="abs" style="left:1229px;top:87.6px" width="8" height="5" viewBox="0 0 8 5"><path d="M0 0H8L4 4.6Z" fill="#f1f1f1"/></svg>
<svg class="abs" style="left:1244.5px;top:84.8px" width="8" height="11" viewBox="0 0 8 11"><path d="M1.8 0.6 H6.2 V6 M1.8 0.6 V6 M0.2 6.3 H7.8 M4 6.3 V10.8 M5.4 0.6 V6" fill="none" stroke="#f1f1f1" stroke-width="1.1"/></svg>
<svg class="abs" style="left:1259.5px;top:86px" width="9.4" height="8.2" viewBox="0 0 10 9"><path d="M0.8 0.5 L9.2 8.5 M9.2 0.5 L0.8 8.5" stroke="#f1f1f1" stroke-width="1.7"/></svg>
<svg class="abs" style="left:1084.5px;top:108px" width="12" height="12" viewBox="0 0 12 12"><circle cx="6" cy="6" r="5.5" fill="#4a4a4e"/><path d="M9.2 6H3.6M6 3.4L3.2 6L6 8.6" stroke="#2d2d30" stroke-width="1.5" fill="none"/></svg>
<svg class="abs" style="left:1105px;top:108px" width="12" height="12" viewBox="0 0 12 12"><circle cx="6" cy="6" r="5.5" fill="#4a4a4e"/><path d="M2.8 6H8.4M6 3.4L8.8 6L6 8.6" stroke="#2d2d30" stroke-width="1.5" fill="none"/></svg>
<svg class="abs" style="left:1125px;top:106px" width="14" height="14" viewBox="0 0 14 14"><path d="M7 1.2 L13.4 7.4 M7 1.2 L0.6 7.4" stroke="#f1f1f1" stroke-width="1.6" fill="none"/><path d="M2.4 6.6 V13 H5.6 V9 H8.4 V13 H11.6 V6.6 L7 2.4 Z" fill="none" stroke="#f1f1f1" stroke-width="1.3"/><rect x="10" y="1.4" width="1.8" height="3" fill="#f1f1f1"/></svg>
<div style="left:1145.8px;top:104.5px;width:1px;height:18px;background:#46464a;"></div>
<svg class="abs" style="left:1155.2px;top:106.2px" width="14" height="15" viewBox="0 0 14 15"><circle cx="8" cy="9" r="4.6" fill="none" stroke="#f1f1f1" stroke-width="1.3"/><path d="M8 6.4V9.2H10.4" fill="none" stroke="#f1f1f1" stroke-width="1.1"/><path d="M0.2 0.6H5.2M2.7 0.6V4" stroke="#f1f1f1" stroke-width="1.2"/></svg>
<svg class="abs" style="left:1174px;top:112px" width="6" height="4" viewBox="0 0 6 4"><path d="M0 0.3H6L3 3.6Z" fill="#999999"/></svg>
<svg class="abs" style="left:1187px;top:107.5px" width="12" height="12" viewBox="0 0 12 12"><path d="M1.4 3.4H11M1.4 8.6H11" stroke="#f1f1f1" stroke-width="1.5"/><path d="M4 0.8L1 3.4L4 6M8 6L11 8.6L8 11.2" fill="none" stroke="#f1f1f1" stroke-width="1.5"/></svg>
<svg class="abs" style="left:1207px;top:106.5px" width="13" height="14" viewBox="0 0 13 14"><path d="M9.6 4.4 A4.9 4.9 0 1 0 11.2 9.6" fill="none" stroke="#75beff" stroke-width="2"/><path d="M6.4 0.2 L11.4 2.6 L7.6 6.4 Z" fill="#75beff"/></svg>
<svg class="abs" style="left:1228.5px;top:108px" width="12" height="11" viewBox="0 0 12 11"><path d="M3.6 2.6V0.7H11.3V6.3H9.4M1.8 4.4V2.6H9.4V8.2H7.6" fill="none" stroke="#f1f1f1" stroke-width="1.2"/><rect x="0.6" y="4.6" width="6.8" height="5.6" fill="none" stroke="#f1f1f1" stroke-width="1.2"/><path d="M2.4 7.4H5.6" stroke="#f1f1f1" stroke-width="1.2"/></svg>
<svg class="abs" style="left:1267px;top:104.5px" width="5" height="3" viewBox="0 0 5 3"><path d="M0.8 0V2.6M3.8 0V2.6" stroke="#999" stroke-width="1"/></svg>
<div class="search" style="left:1077px;top:127px;width:197px;height:18.6px;background:#333337;border:1px solid #3f3f46;box-sizing:border-box;"></div>
<div style="left:1263px;top:128px;width:10px;height:16.6px;background:#3f3f46;"></div>
<span class="t" style="left:1081.5px;top:126px;color:#999999;transform:scaleX(0.9719);">Обозреватель решений — пои</span>
<svg class="abs" style="left:1247.5px;top:130.5px" width="13" height="13" viewBox="0 0 13 13"><circle cx="8" cy="5" r="3.4" fill="none" stroke="#f1f1f1" stroke-width="1.9"/><path d="M5.6 7.4 L1.3 11.7" stroke="#f1f1f1" stroke-width="2.4" stroke-linecap="round"/></svg>
<svg class="abs" style="left:1265.5px;top:135.5px" width="6" height="4" viewBox="0 0 6 4"><path d="M0 0.3H6L3 3.6Z" fill="#f1f1f1"/></svg>
<section class="abs tree" style="left:1077px;top:150px;width:182.5px;height:164px">
<div class="abs" style="left:0;top:0.6px;width:182.5px;height:17.3px;background:#3f3f46"></div>
<svg class="abs" style="left:10.0px;top:2.0px" width="16" height="14" viewBox="0 0 16 14"><path d="M2.6 6V0.7H15V10.4H9" fill="none" stroke="#f1f1f1" stroke-width="1.3"/><path d="M0.4 7.6L1.4 7L3.4 9L6 6.4L7.6 7.2V12.8L6 13.6L3.4 11L1.4 13L0.4 12.4Z M6 8.6L4.4 10L6 11.4Z" fill="#b180d7"/></svg>
<span class="t" style="left:30.9px;top:-1px;transform:scaleX(0.9466);">Решение "GamePad1"  (проек</span>
<svg class="abs" style="left:9.7px;top:22.4px" width="7" height="7" viewBox="0 0 7 7"><path d="M6.5 0.5V6.5H0.5Z" fill="#f1f1f1"/></svg>
<svg class="abs" style="left:28.2px;top:19.6px" width="14" height="12" viewBox="0 0 14 12"><rect x="0.6" y="0.6" width="12.8" height="10.8" fill="#1e1e1e" stroke="#6fae6d" stroke-width="1.2"/><text x="2" y="9" font-family="Liberation Sans, sans-serif" font-size="8.5" font-weight="700" fill="#f1f1f1" textLength="10" lengthAdjust="spacingAndGlyphs">C#</text></svg>
<span class="t" style="left:47.6px;top:16px;font-weight:700;transform:scaleX(0.9318);">GamePad1</span>
<svg class="abs" style="left:26.6px;top:37.4px" width="6" height="10" viewBox="0 0 6 10"><path d="M0.7 0.9L5.2 5L0.7 9.1Z" fill="none" stroke="#f1f1f1" stroke-width="1.1"/></svg>
<svg class="abs" style="left:46.0px;top:35.9px" width="13" height="13" viewBox="0 0 13 13"><path d="M1.6 11.4L7.4 5.6" stroke="#f1f1f1" stroke-width="2.6" stroke-linecap="round"/><path d="M12.2 2.6A3.4 3.4 0 1 1 10.2 0.7L8 2.9L8.6 4.6L10.2 5L12.2 2.6Z" fill="#f1f1f1"/></svg>
<span class="t" style="left:64.4px;top:33px;transform:scaleX(0.9404);">Properties</span>
<svg class="abs" style="left:26.6px;top:54.3px" width="6" height="10" viewBox="0 0 6 10"><path d="M0.7 0.9L5.2 5L0.7 9.1Z" fill="none" stroke="#f1f1f1" stroke-width="1.1"/></svg>
<svg class="abs" style="left:45.5px;top:55.3px" width="14" height="8" viewBox="0 0 14 8"><rect x="0" y="1.6" width="3.4" height="4" fill="#d4d4d4"/><rect x="3.4" y="3.2" width="3.2" height="1" fill="#d4d4d4"/><rect x="7.2" y="0.4" width="6.4" height="6.6" fill="#d4d4d4"/></svg>
<span class="t" style="left:64.4px;top:49px;transform:scaleX(0.9852);">Ссылки</span>
<svg class="abs" style="left:45.4px;top:70.4px" width="13.2" height="11.4" viewBox="0 0 15 13"><rect x="0.6" y="0.6" width="13.8" height="11.8" fill="none" stroke="#d4d4d4" stroke-width="1.2"/><path d="M1.4 10.6L5 6.4L7.6 9L10 7L13.6 10.6" fill="none" stroke="#d4d4d4" stroke-width="1.2"/><circle cx="9.4" cy="3.8" r="1.3" fill="#d4d4d4"/></svg>
<span class="t" style="left:64.4px;top:66px;transform:scaleX(0.8738);">359_4356_1288881058.jp</span>
<svg class="abs" style="left:45.6px;top:86.8px" width="13.4" height="12.5" viewBox="0 0 15 14"><path d="M6 2.4V0.7H11L14.2 3.8V11.4H6.4" fill="none" stroke="#d4d4d4" stroke-width="1.2"/><path d="M10.6 0.8V4.2H14" fill="none" stroke="#d4d4d4" stroke-width="1"/><path d="M3.6 7.6V13.4" stroke="#d4d4d4" stroke-width="1.8"/><path d="M1 3.4V5.4A2.6 2.6 0 0 0 6.2 5.4V3.4" fill="none" stroke="#d4d4d4" stroke-width="1.6"/></svg>
<span class="t" style="left:64.4px;top:83px;transform:scaleX(1.0099);">App.config</span>
<svg class="abs" style="left:26.6px;top:104.9px" width="6" height="10" viewBox="0 0 6 10"><path d="M0.7 0.9L5.2 5L0.7 9.1Z" fill="none" stroke="#f1f1f1" stroke-width="1.1"/></svg>
<svg class="abs" style="left:46.2px;top:103.2px" width="11.6" height="13.4" viewBox="0 0 13 15"><path d="M2.6 7.4V0.7H8.4L11.6 3.8V13H10.6" fill="none" stroke="#d4d4d4" stroke-width="1.2"/><path d="M8 0.8V4.2H11.4" fill="none" stroke="#d4d4d4" stroke-width="1"/><rect x="3" y="9.4" width="5.4" height="3.8" fill="#4fb4f0"/><path d="M2.2 9.4L0.4 11.3L2.2 13.2M9.4 9.4L11.2 11.3L9.4 13.2" fill="none" stroke="#d4d4d4" stroke-width="1"/></svg>
<span class="t" style="left:64.4px;top:100px;transform:scaleX(0.9658);">App.xaml</span>
<svg class="abs" style="left:26.6px;top:121.7px" width="6" height="10" viewBox="0 0 6 10"><path d="M0.7 0.9L5.2 5L0.7 9.1Z" fill="none" stroke="#f1f1f1" stroke-width="1.1"/></svg>
<svg class="abs" style="left:46.2px;top:120.0px" width="11.6" height="13.4" viewBox="0 0 13 15"><path d="M2.6 7.4V0.7H8.4L11.6 3.8V13H10.6" fill="none" stroke="#d4d4d4" stroke-width="1.2"/><path d="M8 0.8V4.2H11.4" fill="none" stroke="#d4d4d4" stroke-width="1"/><rect x="3" y="9.4" width="5.4" height="3.8" fill="#4fb4f0"/><path d="M2.2 9.4L0.4 11.3L2.2 13.2M9.4 9.4L11.2 11.3L9.4 13.2" fill="none" stroke="#d4d4d4" stroke-width="1"/></svg>
<span class="t" style="left:64.4px;top:117px;transform:scaleX(0.9971);">MainWindow.xaml</span>
<svg class="abs" style="left:45.6px;top:137.3px" width="13.4" height="12.5" viewBox="0 0 15 14"><path d="M6 2.4V0.7H11L14.2 3.8V11.4H6.4" fill="none" stroke="#d4d4d4" stroke-width="1.2"/><path d="M10.6 0.8V4.2H14" fill="none" stroke="#d4d4d4" stroke-width="1"/><path d="M3.6 7.6V13.4" stroke="#d4d4d4" stroke-width="1.8"/><path d="M1 3.4V5.4A2.6 2.6 0 0 0 6.2 5.4V3.4" fill="none" stroke="#d4d4d4" stroke-width="1.6"/></svg>
<span class="t" style="left:64.4px;top:134px;transform:scaleX(0.9636);">packages.config</span>
<svg class="abs" style="left:45.4px;top:154.7px" width="13.2" height="11.4" viewBox="0 0 15 13"><rect x="0.6" y="0.6" width="13.8" height="11.8" fill="none" stroke="#d4d4d4" stroke-width="1.2"/><path d="M1.4 10.6L5 6.4L7.6 9L10 7L13.6 10.6" fill="none" stroke="#d4d4d4" stroke-width="1.2"/><circle cx="9.4" cy="3.8" r="1.3" fill="#d4d4d4"/></svg>
<span class="t" style="left:64.4px;top:151px;transform:scaleX(0.9846);">round.png</span>
</section>
<div style="left:1259.5px;top:150px;width:14.5px;height:164px;background:#3e3e42;"></div>
<svg class="abs" style="left:1262.5px;top:156px" width="9" height="5" viewBox="0 0 9 5"><path d="M4.5 0.2L8.8 4.8H0.2Z" fill="#999"/></svg>
<div style="left:1262.6px;top:166px;width:8.2px;height:118px;background:#686868;"></div>
<svg class="abs" style="left:1262.5px;top:303px" width="9" height="5" viewBox="0 0 9 5"><path d="M4.5 4.8L8.8 0.2H0.2Z" fill="#999"/></svg>
<div style="left:1077px;top:314px;width:182.5px;height:16px;background:#3e3e42;"></div>
<div style="left:1259.5px;top:314px;width:14.5px;height:16px;background:#333337;"></div>
<svg class="abs" style="left:1082px;top:317px" width="5" height="9" viewBox="0 0 5 9"><path d="M4.8 0.3V8.7L0.3 4.5Z" fill="#999"/></svg>
<div style="left:1092px;top:317.6px;width:126px;height:8.2px;background:#686868;"></div>
<svg class="abs" style="left:1248px;top:317px" width="5" height="9" viewBox="0 0 5 9"><path d="M0.2 0.3V8.7L4.7 4.5Z" fill="#999"/></svg>
<div style="left:1077px;top:330px;width:197px;height:19px;background:#2d2d30;"></div>
<div style="left:1077px;top:330px;width:64px;height:19px;background:#252526;"></div>
<span class="t" style="left:1081.5px;top:330px;color:#0097fb;transform:scaleX(0.9431);">Обозрев...</span>
<span class="t" style="left:1147.1px;top:330px;color:#d0d0d0;transform:scaleX(0.9075);">Team Exp...</span>
<span class="t" style="left:1213.2px;top:330px;color:#d0d0d0;transform:scaleX(0.9520);">Уведомл...</span>
</aside>
<aside class="props">
<div class="pane" style="left:1076px;top:356px;width:199px;height:275px;background:#252526;border:1px solid #3f3f46;box-sizing:border-box;"></div>
<div style="left:1077px;top:357px;width:197px;height:66px;background:#2d2d30;"></div>
<h2 class="t" style="left:1080.6px;top:356px;color:#d0d0d0;transform:scaleX(0.9386);">Свойства</h2>
<div class="abs dots" style="left:1136px;top:363px;width:87px;height:5px"></div>
<svg class="abs" style="left:1229.5px;top:362.8px" width="8" height="5" viewBox="0 0 8 5"><path d="M0 0H8L4 4.6Z" fill="#f1f1f1"/></svg>
<svg class="abs" style="left:1245px;top:360.2px" width="8" height="11" viewBox="0 0 8 11"><path d="M1.8 0.6 H6.2 V6 M1.8 0.6 V6 M0.2 6.3 H7.8 M4 6.3 V10.8 M5.4 0.6 V6" fill="none" stroke="#f1f1f1" stroke-width="1.1"/></svg>
<svg class="abs" style="left:1259.6px;top:361.4px" width="9.4" height="8.2" viewBox="0 0 10 9"><path d="M0.8 0.5 L9.2 8.5 M9.2 0.5 L0.8 8.5" stroke="#f1f1f1" stroke-width="1.7"/></svg>
<div style="left:1077px;top:376px;width:197px;height:22px;background:#2d2d30;border:1px solid #3a3a3f;box-sizing:border-box;"></div>
<svg class="abs" style="left:1265.5px;top:385.5px" width="6" height="4" viewBox="0 0 6 4"><path d="M0 0.3H6L3 3.6Z" fill="#f1f1f1"/></svg>
<svg class="abs" style="left:1082px;top:403.5px" width="15" height="14" viewBox="0 0 15 14"><rect x="0.6" y="0.6" width="4.4" height="4.4" fill="none" stroke="#f1f1f1" stroke-width="1.2"/><rect x="0.6" y="8.6" width="4.4" height="4.4" fill="none" stroke="#f1f1f1" stroke-width="1.2"/><path d="M1.6 2.8H4M2.8 1.6V4M1.6 10.8H4M2.8 9.6V12" stroke="#f1f1f1" stroke-width="1"/><path d="M7 1.4H14M7 4.4H14M7 9.4H12M7 12.4H14" stroke="#c8c8c8" stroke-width="1.2" stroke-dasharray="2 0.8"/></svg>
<div style="left:1101px;top:400.2px;width:21.5px;height:20.4px;background:#1b2a3c;border:1px solid #3399ff;box-sizing:border-box;"></div>
<svg class="abs" style="left:1104px;top:404px" width="16" height="14" viewBox="0 0 16 14"><rect x="0.4" y="0.4" width="6.4" height="5.8" fill="#e0e0e0"/><text x="1.2" y="5.6" font-family="Liberation Sans, sans-serif" font-size="6.5" font-weight="700" fill="#1b2a3c">A</text><text x="0.6" y="13.4" font-family="Liberation Sans, sans-serif" font-size="8" font-weight="700" fill="#e0e0e0">Z</text><path d="M11.4 1V11" stroke="#75beff" stroke-width="1.8"/><path d="M8 8L11.4 12.2L14.8 8Z" fill="#75beff"/></svg>
<svg class="abs" style="left:1132.5px;top:404px" width="13" height="13" viewBox="0 0 13 13"><path d="M1.6 11.4L7.4 5.6" stroke="#77777b" stroke-width="2.6" stroke-linecap="round"/><path d="M12.2 2.6A3.4 3.4 0 1 1 10.2 0.7L8 2.9L8.6 4.6L10.2 5L12.2 2.6Z" fill="#77777b"/></svg>
<div style="left:1077px;top:570px;width:197px;height:1px;background:#38383c;"></div>
</aside>
<footer class="bottom">
<span class="t" style="left:6.3px;top:634px;color:#d0d0d0;transform:scaleX(1.0119);">Список ошибок</span>
<span class="t" style="left:100.5px;top:634px;color:#d0d0d0;transform:scaleX(0.9430);">Вывод</span>
<div style="left:6px;top:655px;width:83px;height:5px;background:#3f3f46;"></div>
<div style="left:100.5px;top:655px;width:33px;height:5px;background:#3f3f46;"></div>
<div class="status" style="left:0px;top:660px;width:1280px;height:21px;background:#007acc;"></div>
<span class="t" style="left:4.3px;top:661px;color:#ffffff;transform:scaleX(0.9855);">Готово</span>
<span class="t" style="left:944.0px;top:661px;color:#ffffff;transform:scaleX(0.9254);">Строка 34</span>
<span class="t" style="left:1030.0px;top:661px;color:#ffffff;transform:scaleX(0.9314);">Столбец 13</span>
<span class="t" style="left:1116.0px;top:661px;color:#ffffff;transform:scaleX(0.9332);">Знак 13</span>
<span class="t" style="left:1244.0px;top:661px;color:#ffffff;transform:scaleX(0.8989);">ВСТ</span>
</footer>
</body></html>
